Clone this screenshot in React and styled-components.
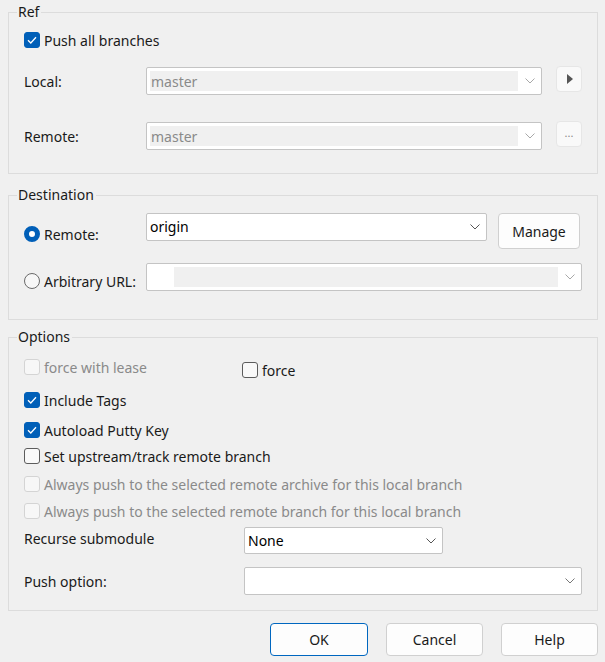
import React from 'react';
import styled, { createGlobalStyle } from 'styled-components';

const Global = createGlobalStyle`
    html, body {
        margin: 0;
        background: #f0f0f0;
    }
    body {
        font-family: "Noto Sans", "Open Sans", sans-serif;
        font-size: 14px;
        color: #1a1a1a;
    }
`;

const Chevron = ({ color = '#606060' }) => (
    <svg width="10" height="6" viewBox="0 0 10 6">
        <path d="M0.5 0.5 L5 5 L9.5 0.5" fill="none" stroke={color} strokeWidth="1" />
    </svg>
);

const Check = () => (
    <svg width="10" height="8" viewBox="0 0 10 8">
        <path d="M1 4.2 L3.8 7 L9 1.2" fill="none" stroke="#fff" strokeWidth="1.3" />
    </svg>
);

const CheckBox = ({ checked, disabled, label, ...rest }) => (
    <CheckRow $disabled={disabled} {...rest}>
        <Box $checked={checked} $disabled={disabled}>{checked && <Check />}</Box>
        <span>{label}</span>
    </CheckRow>
);

const Combo = ({ value, disabled, inset, chevron, ...rest }) => (
    <ComboBox {...rest}>
        {disabled ? (
            <ComboInner $inset={inset}>{value}</ComboInner>
        ) : (
            <ComboText>{value}</ComboText>
        )}
        <ComboArrow><Chevron color={chevron} /></ComboArrow>
    </ComboBox>
);

const App = () => {
    return (
        <Page>
            <Global />
            <Group $gap={0}>
                <Legend>Ref</Legend>
                <CheckBox checked label="Push all branches" style={{ marginTop: 8 }} />
                <RefGrid>
                    <Label>Local:</Label>
                    <Combo disabled value="master" chevron="#a8a8a8" />
                    <SmallBtn>
                        <svg width="6" height="10" viewBox="0 0 6 10"><path d="M0 0 L6 5 L0 10 Z" fill="#555" /></svg>
                    </SmallBtn>
                    <Label>Remote:</Label>
                    <Combo disabled value="master" chevron="#a8a8a8" />
                    <SmallBtn $dots>...</SmallBtn>
                </RefGrid>
                <Spacer $h={22} />
            </Group>

            <Group $gap={12}>
                <Legend>Destination</Legend>
                <DestGrid>
                    <RadioLabel>
                        <Radio $checked />
                        <span>Remote:</span>
                    </RadioLabel>
                    <Combo value="origin" chevron="#555" style={{ alignSelf: 'start' }} />
                    <Button $w={82}>Manage</Button>
                    <RadioLabel>
                        <Radio />
                        <span>Arbitrary URL:</span>
                    </RadioLabel>
                    <Combo disabled inset value="" chevron="#a8a8a8" style={{ gridColumn: '2 / 4' }} />
                </DestGrid>
                <Spacer $h={27} />
            </Group>

            <Group $gap={8}>
                <Legend>Options</Legend>
                <ForceRow>
                    <CheckBox disabled label="force with lease" style={{ width: 218, marginTop: -2 }} />
                    <CheckBox label="force" style={{ marginTop: 1 }} />
                </ForceRow>
                <CheckBox checked label="Include Tags" style={{ marginTop: 8 }} />
                <CheckBox checked label="Autoload Putty Key" style={{ marginTop: 8 }} />
                <CheckBox label="Set upstream/track remote branch" style={{ marginTop: 4 }} />
                <CheckBox disabled label="Always push to the selected remote archive for this local branch" style={{ marginTop: 6 }} />
                <CheckBox disabled label="Always push to the selected remote branch for this local branch" style={{ marginTop: 5 }} />
                <OptGrid>
                    <Label $raise={5}>Recurse submodule</Label>
                    <Combo value="None" chevron="#555" style={{ width: 199, height: 27, alignSelf: 'start' }} />
                    <Label>Push option:</Label>
                    <Combo value="" chevron="#777" />
                </OptGrid>
                <Spacer $h={15} />
            </Group>

            <ButtonBar>
                <Button $w={98} $default>OK</Button>
                <Button $w={97}>Cancel</Button>
                <Button $w={97}>Help</Button>
            </ButtonBar>
        </Page>
    );
};

export default App;

const Page = styled.div`
    padding: 3px 7px 0 8px;
    width: 590px;
`;

const Group = styled.fieldset`
    margin: ${p => p.$gap}px 0 0 0;
    padding: 0 15px 0 15px;
    border: 1px solid #dcdcdc;
    min-width: 0;
    display: flex;
    flex-direction: column;
`;

const Legend = styled.legend`
    margin-left: -7px;
    padding: 0 2px 0 1px;
    line-height: 18px;
    font-size: 14px;
    color: #1a1a1a;
`;

const Spacer = styled.div`
    height: ${p => p.$h}px;
`;

const CheckRow = styled.label`
    display: flex;
    align-items: center;
    gap: 4px;
    height: 22px;
    color: ${p => (p.$disabled ? '#8a8a8a' : '#1a1a1a')};
    white-space: nowrap;
`;

const Box = styled.span`
    box-sizing: border-box;
    width: 16px;
    height: 16px;
    border-radius: 3px;
    display: flex;
    align-items: center;
    justify-content: center;
    flex: none;
    background: ${p => (p.$checked ? '#005fb8' : p.$disabled ? '#f7f7f7' : '#f9f9f9')};
    border: 1px solid ${p => (p.$checked ? '#005fb8' : p.$disabled ? '#d4d4d4' : '#5c5c5c')};
`;

const Radio = styled.span`
    box-sizing: border-box;
    width: 16px;
    height: 16px;
    border-radius: 50%;
    flex: none;
    background: ${p => (p.$checked ? '#fff' : '#f7f7f7')};
    border: ${p => (p.$checked ? '5px solid #005fb8' : '1px solid #6a6a6a')};
`;

const RadioLabel = styled.label`
    display: flex;
    align-items: center;
    gap: 4px;
    align-self: start;
    height: 22px;
    margin-top: 9px;
    white-space: nowrap;
`;

const Label = styled.div`
    display: flex;
    align-items: center;
    white-space: nowrap;
    padding-bottom: ${p => p.$raise || 0}px;
`;

const RefGrid = styled.div`
    display: grid;
    grid-template-columns: 108px 1fr 26px;
    grid-template-rows: 30px 30px;
    column-gap: 14px;
    row-gap: 25px;
    margin-top: 15px;
`;

const DestGrid = styled.div`
    display: grid;
    grid-template-columns: 111px 1fr 84px;
    column-gap: 11px;
    row-gap: 12px;
    margin-top: 9px;
    & > label:nth-of-type(1) {
        margin-top: 10px;
    }
`;

const ForceRow = styled.div`
    display: flex;
    margin-top: 12px;
`;

const OptGrid = styled.div`
    display: grid;
    grid-template-columns: 220px 1fr;
    grid-template-rows: 28px 28px;
    row-gap: 12px;
    margin-top: 5px;
`;

const ComboBox = styled.div`
    box-sizing: border-box;
    height: 28px;
    align-self: center;
    display: flex;
    align-items: center;
    background: #fff;
    border: 1px solid #c4c4c4;
    border-radius: 2px;
    padding: 3px 0 3px 3px;
`;

const ComboInner = styled.div`
    flex: 1;
    align-self: stretch;
    margin-left: ${p => (p.$inset ? '24px' : '0')};
    background: #f0f0f0;
    color: #8a8a8a;
    display: flex;
    align-items: center;
    padding-left: 1px;
`;

const ComboText = styled.div`
    flex: 1;
    color: #000;
    margin-top: -1px;
`;

const ComboArrow = styled.div`
    width: 23px;
    display: flex;
    justify-content: center;
    align-items: center;
`;

const SmallBtn = styled.div`
    box-sizing: border-box;
    align-self: start;
    width: 26px;
    height: 26px;
    border: 1px solid #e6e6e6;
    border-radius: 4px;
    background: #f9f9f9;
    display: flex;
    align-items: center;
    justify-content: center;
    color: #8a8a8a;
    font-size: 11px;
    padding-bottom: ${p => (p.$dots ? '4px' : '0')};
    padding-left: ${p => (p.$dots ? '0' : '2px')};
`;

const Button = styled.button`
    box-sizing: border-box;
    width: ${p => p.$w}px;
    height: ${p => (p.$w === 82 ? 36 : 33)}px;
    align-self: start;
    font-family: inherit;
    font-size: 14px;
    color: #1a1a1a;
    background: #fdfdfd;
    border: 1px solid ${p => (p.$default ? '#0067c0' : '#d0d0d0')};
    border-radius: 4px;
    padding: 0;
`;

const ButtonBar = styled.div`
    display: flex;
    justify-content: flex-end;
    gap: 18px;
    margin-top: 12px;
`;
